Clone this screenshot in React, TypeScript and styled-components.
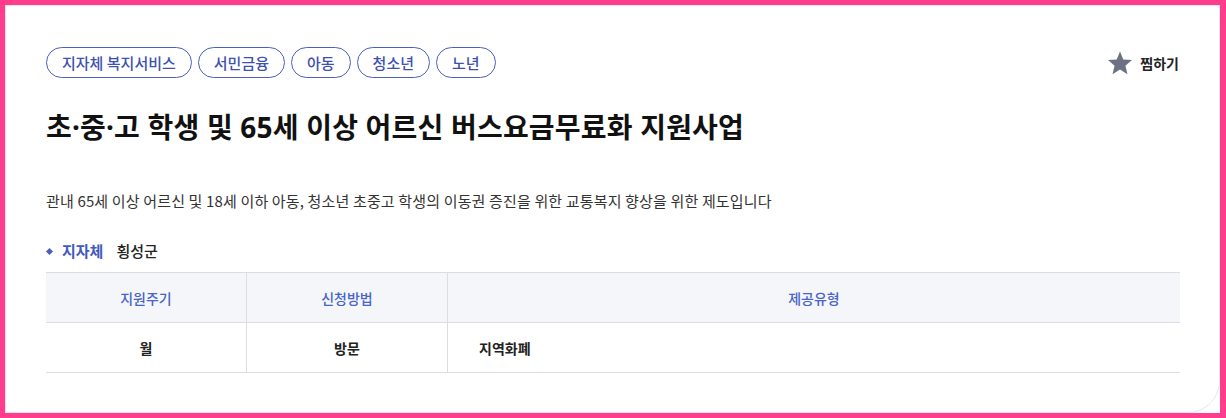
import styled, { createGlobalStyle } from 'styled-components';

const GlobalStyle = createGlobalStyle`
  html, body {
    margin: 0;
    padding: 0;
    background: #ff3d8c;
  }
  body {
    font-family: 'Noto Sans CJK KR', 'Noto Sans', sans-serif;
  }
`;

// layout
const Frame = styled.div`
  padding: 5px 6px 5px 5px;
  height: 418px;
  box-sizing: border-box;
`;
const Sheet = styled.div`
  height: 100%;
  background: #fff;
`;
const Card = styled.div`
  height: 100%;
  box-sizing: border-box;
  border: 1px solid #e6e6ec;
  border-radius: 0 0 32px 0;
  padding: 41px 39px 0 40px;
`;
const TopRow = styled.div`
  display: flex;
  justify-content: space-between;
  align-items: center;
`;
const Tags = styled.ul`
  display: flex;
  gap: 6px;
  margin: 0;
  padding: 0;
  list-style: none;
`;
const Tag = styled.li`
  height: 31px;
  box-sizing: border-box;
  padding: 0 15px;
  border: 1px solid #4a5fc1;
  border-radius: 16px;
  color: #3d51b0;
  font-size: 15px;
  font-weight: 500;
  line-height: 29px;
`;
const Wish = styled.button`
  display: flex;
  align-items: center;
  gap: 8px;
  margin-right: 1px;
  padding: 0;
  border: 0;
  background: none;
  font-family: inherit;
  font-size: 14px;
  font-weight: 700;
  color: #222;
  cursor: pointer;
`;
const Title = styled.h2`
  margin: 29px 0 0;
  font-family: 'Noto Sans', 'Noto Sans CJK KR', sans-serif;
  font-size: 28px;
  font-weight: 700;
  color: #111;
  line-height: 40px;
  letter-spacing: 0.2px;
`;
const Desc = styled.p`
  margin: 43px 0 0;
  font-size: 15px;
  line-height: 22px;
  color: #333;
  letter-spacing: 0.15px;
`;
const Meta = styled.div`
  display: flex;
  align-items: center;
  margin-top: 28px;
  font-size: 15px;
  line-height: 22px;
`;
const Bullet = styled.span`
  width: 5px;
  height: 5px;
  margin: 0 10px 0 1px;
  background: #4a5fc1;
  transform: rotate(45deg);
`;
const MetaLabel = styled.span`
  font-weight: 700;
  color: #4259bd;
  margin-right: 13px;
`;
const MetaValue = styled.span`
  font-weight: 500;
  color: #222;
`;
const Table = styled.table`
  width: 100%;
  margin-top: 10px;
  border-collapse: collapse;
  table-layout: fixed;
  font-size: 14px;
`;
const Th = styled.th<{ w?: number }>`
  width: ${(p) => (p.w ? `${p.w}px` : 'auto')};
  height: 49px;
  padding: 0;
  background: #f4f6fa;
  border-top: 1px solid #dcdde2;
  border-bottom: 1px solid #dcdde2;
  color: #4a63c8;
  font-weight: 500;
  text-align: center;
  & + & {
    border-left: 1px solid #dcdde2;
  }
`;
const Td = styled.td<{ left?: boolean }>`
  height: 49px;
  padding: ${(p) => (p.left ? '0 0 0 31px' : '0')};
  border-bottom: 1px solid #dcdde2;
  color: #222;
  font-weight: 700;
  text-align: ${(p) => (p.left ? 'left' : 'center')};
  & + & {
    border-left: 1px solid #dcdde2;
  }
`;

const tags = ['지자체 복지서비스', '서민금융', '아동', '청소년', '노년'];

function StarIcon() {
  return (
    <svg width="24" height="24" viewBox="0 0 24 24">
      <path
        d="M12 0.5l3.3 8 8.7 0.6-6.6 5.6 2.1 8.6L12 18.6l-7.5 4.7 2.1-8.6L0 9.1l8.7-0.6z"
        fill="#6e7184"
      />
    </svg>
  );
}

export default function App() {
  return (
    <>
      <GlobalStyle />
      <Frame>
        <Sheet>
          <Card>
            <TopRow>
              <Tags>
                {tags.map((t) => (
                  <Tag key={t}>{t}</Tag>
                ))}
              </Tags>
              <Wish>
                <StarIcon />
                찜하기
              </Wish>
            </TopRow>
            <Title>초·중·고 학생 및 65세 이상 어르신 버스요금무료화 지원사업</Title>
            <Desc>
              관내 65세 이상 어르신 및 18세 이하 아동, 청소년 초중고 학생의 이동권 증진을 위한 교통복지 향상을 위한 제도입니다
            </Desc>
            <Meta>
              <Bullet />
              <MetaLabel>지자체</MetaLabel>
              <MetaValue>횡성군</MetaValue>
            </Meta>
            <Table>
              <thead>
                <tr>
                  <Th w={200}>지원주기</Th>
                  <Th w={200}>신청방법</Th>
                  <Th>제공유형</Th>
                </tr>
              </thead>
              <tbody>
                <tr>
                  <Td>월</Td>
                  <Td>방문</Td>
                  <Td left>지역화폐</Td>
                </tr>
              </tbody>
            </Table>
          </Card>
        </Sheet>
      </Frame>
    </>
  );
}
